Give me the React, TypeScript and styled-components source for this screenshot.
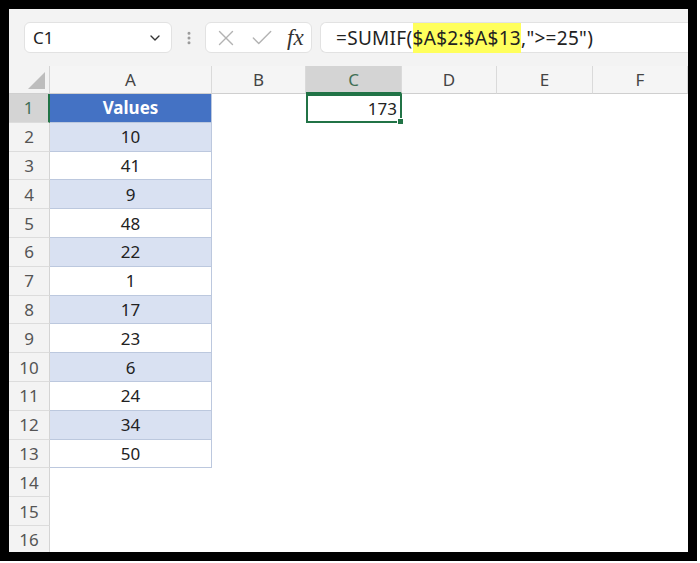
import React from "react";
import styled, { createGlobalStyle } from "styled-components";
import { ChevronDown, X, Check, EllipsisVertical } from "lucide-react";

const GlobalStyle = createGlobalStyle`
  html, body {
    margin: 0;
    padding: 0;
    background: #fff;
  }
  body {
    font-family: "Noto Sans", "Open Sans", sans-serif;
  }
`;

const GREEN = "#217346";

const Frame = styled.div`
  width: 697px;
  height: 561px;
  box-sizing: border-box;
  border: 9px solid #000;
  background: #fff;
  display: flex;
  flex-direction: column;
  overflow: hidden;
`;

const Toolbar = styled.div`
  height: 57px;
  flex: none;
  background: #f3f3f3;
  display: flex;
  align-items: center;
  padding-left: 15px;
`;

const NameBox = styled.div`
  width: 148px;
  height: 31px;
  box-sizing: border-box;
  background: #fff;
  border: 1px solid #e2e2e2;
  border-radius: 6px;
  display: flex;
  align-items: center;
  justify-content: space-between;
  padding: 0 8px 0 8px;
  font-size: 17px;
  color: #222;
`;

const Dots = styled.div`
  width: 16px;
  margin: 0 8px 0 9px;
  display: flex;
  justify-content: center;
  color: #9a9a9a;
`;

const FxBox = styled.div`
  width: 107px;
  height: 31px;
  box-sizing: border-box;
  background: #fff;
  border: 1px solid #e2e2e2;
  border-radius: 6px;
  display: flex;
  align-items: center;
  padding: 0 0 0 7px;
  gap: 10px;
  color: #b3b3b3;
`;

const Fx = styled.span`
  font-family: "Liberation Serif", "DejaVu Serif", serif;
  font-style: italic;
  font-size: 23px;
  color: #333;
  line-height: 1;
  margin-left: 2px;
`;

const FormulaBox = styled.div`
  flex: 1;
  margin-left: 8px;
  height: 31px;
  box-sizing: border-box;
  background: #fff;
  border: 1px solid #e2e2e2;
  border-right: none;
  border-radius: 6px 0 0 6px;
  display: flex;
  align-items: center;
  padding-left: 15px;
  font-size: 19px;
  letter-spacing: 0.3px;
  color: #222;
  white-space: nowrap;
`;

const Highlight = styled.span`
  background: #ffff5c;
  line-height: 30px;
`;

const Sheet = styled.div`
  flex: 1;
  display: grid;
  grid-template-columns: 41px 162px 94px 96px 95px 96px 95px;
  grid-template-rows: 28px;
  grid-auto-rows: 28.8px;
  overflow: hidden;
  background: #fff;
`;

const Corner = styled.div`
  position: relative;
  background: #f3f3f3;
  border-right: 1px solid #d4d4d4;
  border-bottom: 1px solid #cfcfcf;
  &::after {
    content: "";
    position: absolute;
    right: 4px;
    bottom: 4px;
    width: 17px;
    height: 17px;
    background: #bdbdbd;
    clip-path: polygon(100% 0, 100% 100%, 0 100%);
  }
`;

const ColHead = styled.div<{ $selected?: boolean }>`
  background: ${(p) => (p.$selected ? "#d4d4d4" : "#f5f5f5")};
  border-right: 1px solid #dadada;
  border-bottom: ${(p) => (p.$selected ? `2px solid ${GREEN}` : "1px solid #cfcfcf")};
  display: flex;
  align-items: center;
  justify-content: center;
  font-size: 17px;
  color: ${(p) => (p.$selected ? "#3f6f55" : "#444")};
`;

const RowHead = styled.div<{ $selected?: boolean }>`
  box-sizing: border-box;
  background: ${(p) => (p.$selected ? "#d4d4d4" : "#f3f3f3")};
  border-right: ${(p) => (p.$selected ? `2px solid ${GREEN}` : "1px solid #d4d4d4")};
  border-bottom: 1px solid #dcdcdc;
  display: flex;
  align-items: center;
  justify-content: center;
  font-size: 17px;
  color: ${(p) => (p.$selected ? "#3f6f55" : "#555")};
`;

type Tone = "head" | "band" | "plain" | "empty";

const toneBg: Record<Tone, string> = {
  head: "#4472c4",
  band: "#d9e1f2",
  plain: "#fff",
  empty: "#fff",
};

const TableCell = styled.div<{ $tone: Tone }>`
  box-sizing: border-box;
  background: ${(p) => toneBg[p.$tone]};
  border-right: ${(p) => (p.$tone === "empty" ? "none" : "1px solid #bcc8de")};
  border-bottom: ${(p) => (p.$tone === "empty" ? "none" : "1px solid #bcc8de")};
  display: flex;
  align-items: center;
  justify-content: center;
  font-size: 17px;
  font-weight: ${(p) => (p.$tone === "head" ? 700 : 400)};
  color: ${(p) => (p.$tone === "head" ? "#fff" : "#222")};
`;

const Cell = styled.div`
  background: #fff;
`;

const ActiveCell = styled.div`
  position: relative;
  box-sizing: border-box;
  border: 2px solid ${GREEN};
  display: flex;
  align-items: center;
  justify-content: flex-end;
  padding-right: 3px;
  font-size: 17px;
  color: #222;
  &::after {
    content: "";
    position: absolute;
    right: -4px;
    bottom: -4px;
    width: 5px;
    height: 5px;
    background: ${GREEN};
    border: 1px solid #fff;
  }
`;

const values = [10, 41, 9, 48, 22, 1, 17, 23, 6, 24, 34, 50];
const cols = ["A", "B", "C", "D", "E", "F"];

export default function App() {
  const rows = Array.from({ length: 16 }, (_, i) => i + 1);
  return (
    <>
      <GlobalStyle />
      <Frame>
        <Toolbar>
          <NameBox>
            <span>C1</span>
            <ChevronDown size={16} strokeWidth={2} color="#333" />
          </NameBox>
          <Dots>
            <EllipsisVertical size={16} strokeWidth={2.5} />
          </Dots>
          <FxBox>
            <X size={26} strokeWidth={1.3} />
            <Check size={26} strokeWidth={1.3} />
            <Fx>fx</Fx>
          </FxBox>
          <FormulaBox>
            =SUMIF(<Highlight>$A$2:$A$13</Highlight>,"&gt;=25")
          </FormulaBox>
        </Toolbar>
        <Sheet>
          <Corner />
          {cols.map((c) => (
            <ColHead key={c} $selected={c === "C"}>
              {c}
            </ColHead>
          ))}
          {rows.map((r) => {
            let tone: Tone = "empty";
            let text: React.ReactNode = null;
            if (r === 1) {
              tone = "head";
              text = "Values";
            } else if (r <= 13) {
              tone = r % 2 === 0 ? "band" : "plain";
              text = values[r - 2];
            }
            return (
              <React.Fragment key={r}>
                <RowHead $selected={r === 1}>{r}</RowHead>
                <TableCell $tone={tone}>{text}</TableCell>
                <Cell />
                {r === 1 ? <ActiveCell>173</ActiveCell> : <Cell />}
                <Cell />
                <Cell />
                <Cell />
              </React.Fragment>
            );
          })}
        </Sheet>
      </Frame>
    </>
  );
}
